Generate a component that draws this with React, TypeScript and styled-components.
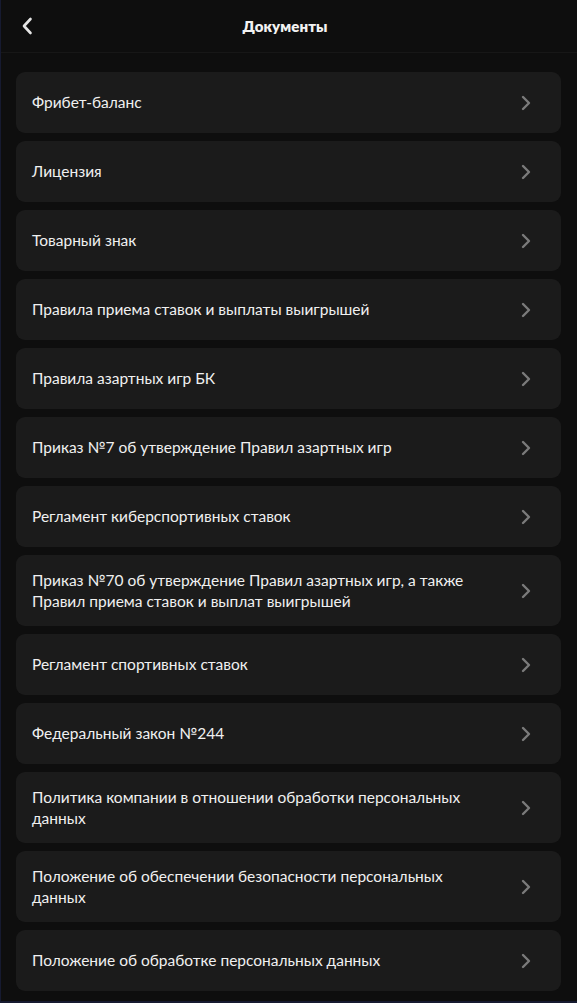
import React from "react";
import styled, { createGlobalStyle } from "styled-components";

const Global = createGlobalStyle`
  html, body { margin: 0; padding: 0; background: #0e0e0e; }
  body { font-family: Lato, "Noto Sans", sans-serif; -webkit-font-smoothing: antialiased; }
  * { box-sizing: border-box; }
`;

const Screen = styled.div`
  width: 577px;
  height: 1003px;
  display: flex;
  flex-direction: column;
  background: #0e0e0e;
  border-left: 1px solid #161a30;
  border-bottom: 2px solid #161a30;
  overflow: hidden;
`;

const Header = styled.header`
  height: 53px;
  flex: none;
  display: grid;
  grid-template-columns: 56px 1fr 64px;
  align-items: center;
  border-bottom: 1px solid #171717;
`;

const BackButton = styled.button`
  background: none;
  border: none;
  padding: 0 0 0 20px;
  height: 100%;
  display: flex;
  align-items: center;
  color: #e6e6e6;
  cursor: pointer;
`;

const Title = styled.h1`
  margin: 0;
  text-align: center;
  font-size: 15px;
  font-weight: 800;
  color: #f2f2f2;
  letter-spacing: 0.1px;
`;

const List = styled.ul`
  list-style: none;
  margin: 0;
  padding: 19px 16px 0 15px;
  display: flex;
  flex-direction: column;
  gap: 8px;
`;

const Item = styled.li`
  min-height: 61px;
  background: #1b1b1b;
  border-radius: 9px;
  display: flex;
  align-items: center;
  justify-content: space-between;
  padding: 15px 30px 15px 16px;
  gap: 24px;
`;

const Label = styled.span`
  color: #f0f0f0;
  font-size: 15.5px;
  line-height: 20.5px;
  max-width: 460px;
`;

const Chevron = styled.span`
  flex: none;
  display: flex;
  color: #7b7b7b;
`;

const items = [
  "Фрибет-баланс",
  "Лицензия",
  "Товарный знак",
  "Правила приема ставок и выплаты выигрышей",
  "Правила азартных игр БК",
  "Приказ №7 об утверждение Правил азартных игр",
  "Регламент киберспортивных ставок",
  "Приказ №70 об утверждение Правил азартных игр, а также Правил приема ставок и выплат выигрышей",
  "Регламент спортивных ставок",
  "Федеральный закон №244",
  "Политика компании в отношении обработки персональных данных",
  "Положение об обеспечении безопасности персональных данных",
  "Положение об обработке персональных данных",
];

export default function App() {
  return (
    <>
      <Global />
      <Screen>
        <Header>
          <BackButton aria-label="Назад">
            <svg width="12" height="18" viewBox="0 0 12 18" fill="none">
              <path d="M9.5 2 L3 9 L9.5 16" stroke="currentColor" strokeWidth="2.6" strokeLinecap="round" strokeLinejoin="round" />
            </svg>
          </BackButton>
          <Title>Документы</Title>
          <span />
        </Header>
        <List>
          {items.map((t) => (
            <Item key={t}>
              <Label>{t}</Label>
              <Chevron>
                <svg width="10" height="16" viewBox="0 0 10 16" fill="none">
                  <path d="M2 2 L8 8 L2 14" stroke="currentColor" strokeWidth="2.4" strokeLinecap="round" strokeLinejoin="round" />
                </svg>
              </Chevron>
            </Item>
          ))}
        </List>
      </Screen>
    </>
  );
}
